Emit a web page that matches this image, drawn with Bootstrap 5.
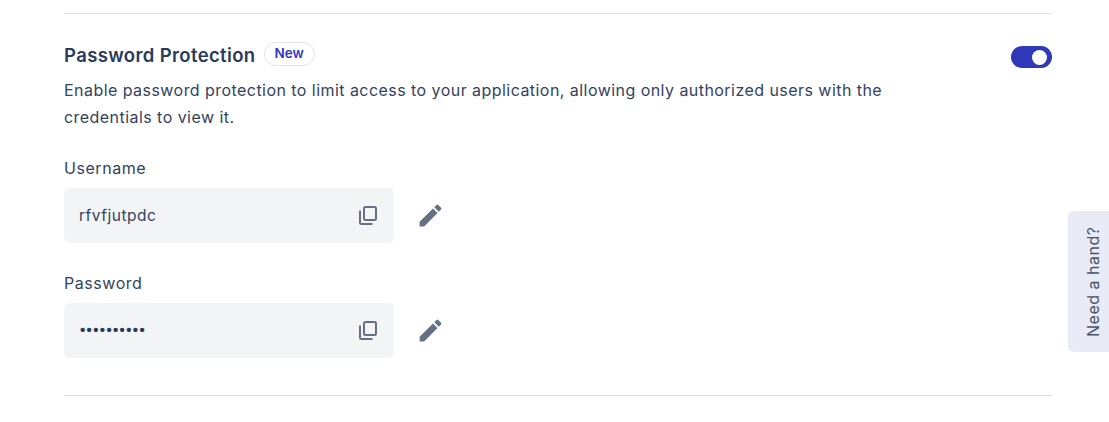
<!DOCTYPE html>
<html lang="en">
<head>
<meta charset="utf-8">
<title>Password Protection</title>
<link href="https://cdn.jsdelivr.net/npm/bootstrap@5.3.0/dist/css/bootstrap.min.css" rel="stylesheet">
<style>
html,body{height:422px;overflow:hidden;background:#fff}
body{font-family:Inter,"Liberation Sans",sans-serif;color:#2b3a58;font-size:16px}
.pane{margin:0 57px 0 64px;height:422px;padding-top:13px}
.rule{height:1px;background:#dfe1e6}
.sect{padding-top:28px;height:381px}
.ttl{font-size:18.5px;font-weight:600;line-height:26px;color:#2a3a5a;letter-spacing:.37px}
.pill{font-size:13.5px;font-weight:600;line-height:20px;height:24px;padding:0 10px;border:1px solid #e1e3ee;border-radius:12px;color:#2f38c0;background:#fff;margin-left:8px;position:relative;top:-1px}
.tog{width:41px;height:22px;border-radius:11px;background:#2f38b8;padding:0 5px 0 0;margin-top:4px}
.tog i{display:block;width:15px;height:15px;background:#fff;border-radius:50%}
.desc{font-size:16px;line-height:27px;margin-top:9px;width:860px;color:#33425f;letter-spacing:.45px}
.lbl{font-size:16px;line-height:24px;color:#33425f;letter-spacing:.55px}
.fld{width:330px;height:55px;background:#f3f4f6;border-radius:6px;padding:0 17px 0 15px;margin-top:8px;font-size:15.5px;color:#33425f;letter-spacing:.5px}
.dots{font-size:15px;letter-spacing:1.35px;color:#2b3a58;font-weight:700;font-family:"Liberation Sans",sans-serif;padding-left:1px}
.cpy{display:block;fill:none;stroke:#667085;stroke-width:2}
.pen{display:block;fill:#667085;margin-left:22px;margin-top:7px}
.hand{position:absolute;right:0;top:211px;width:41px;height:141px;background:#e8eaf6;border-radius:6px 0 0 6px;writing-mode:vertical-rl}
.hand span{display:block;transform:rotate(180deg);width:100%;height:100%;text-align:center;line-height:50px;font-size:16px;color:#4a5468;letter-spacing:.5px}
</style>
</head>
<body>
<main class="pane">
  <div class="rule"></div>
  <section class="sect">
    <div class="d-flex justify-content-between align-items-start">
      <div class="d-flex align-items-center">
        <span class="ttl">Password Protection</span>
        <span class="pill">New</span>
      </div>
      <div class="tog d-flex align-items-center justify-content-end"><i></i></div>
    </div>
    <p class="desc mb-0">Enable password protection to limit access to your application, allowing only authorized users with the credentials to view it.</p>
    <div class="lbl" style="margin-top:25px">Username</div>
    <div class="d-flex align-items-center">
      <div class="fld d-flex align-items-center justify-content-between">
        <span>rfvfjutpdc</span>
        <svg class="cpy" width="18" height="19" viewBox="0 0 18 19"><rect x="5" y="1" width="12" height="13" rx="1.500"/><path d="M1 4.500V16.500A1.500 1.500 0 0 0 2.500 18H13.500"/></svg>
      </div>
      <svg class="pen" width="29" height="29" viewBox="0 0 24 24"><path d="M3 17.250V21h3.750L17.810 9.940l-3.750-3.750L3 17.250zM20.710 7.040a1 1 0 0 0 0-1.410l-2.340-2.340a1 1 0 0 0-1.410 0l-1.830 1.830 3.750 3.750 1.830-1.830z"/></svg>
    </div>
    <div class="lbl" style="margin-top:28px">Password</div>
    <div class="d-flex align-items-center">
      <div class="fld d-flex align-items-center justify-content-between">
        <span class="dots">••••••••••</span>
        <svg class="cpy" width="18" height="19" viewBox="0 0 18 19"><rect x="5" y="1" width="12" height="13" rx="1.500"/><path d="M1 4.500V16.500A1.500 1.500 0 0 0 2.500 18H13.500"/></svg>
      </div>
      <svg class="pen" width="29" height="29" viewBox="0 0 24 24"><path d="M3 17.250V21h3.750L17.810 9.940l-3.750-3.750L3 17.250zM20.710 7.040a1 1 0 0 0 0-1.410l-2.340-2.340a1 1 0 0 0-1.410 0l-1.830 1.830 3.750 3.750 1.830-1.830z"/></svg>
    </div>
  </section>
  <div class="rule"></div>
</main>
<aside class="hand"><span>Need a hand?</span></aside>
</body>
</html>
